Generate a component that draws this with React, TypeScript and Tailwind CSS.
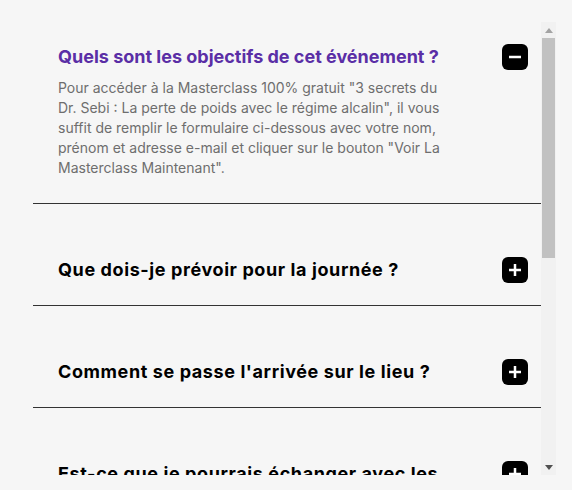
import React from "react";

const faqs = [
    {
        q: "Quels sont les objectifs de cet événement ?",
        a: [
            "Pour accéder à la Masterclass 100% gratuit \"3 secrets du",
            "Dr. Sebi : La perte de poids avec le régime alcalin\", il vous",
            "suffit de remplir le formulaire ci-dessous avec votre nom,",
            "prénom et adresse e-mail et cliquer sur le bouton \"Voir La",
            "Masterclass Maintenant\".",
        ],
        open: true,
    },
    { q: "Que dois-je prévoir pour la journée ?", a: [], open: false },
    { q: "Comment se passe l'arrivée sur le lieu ?", a: [], open: false },
    { q: "Est-ce que je pourrais échanger avec les intervenants ?", a: [], open: false },
    { q: "Combien de temps dure la Masterclass ?", a: [], open: false },
    { q: "Puis-je revoir la Masterclass plus tard ?", a: [], open: false },
];

const ToggleButton = ({ open }: { open: boolean }) => {
    return (
        <button className="shrink-0 w-[26px] h-[26px] rounded-[6px] bg-black flex items-center justify-center">
            <svg width="14" height="14" viewBox="0 0 14 14">
                <rect x="1" y="5.75" width="12" height="2.5" fill="#fff" />
                {!open && <rect x="5.75" y="1" width="2.5" height="12" fill="#fff" />}
            </svg>
        </button>
    );
};

const Scrollbar = () => {
    return (
        <div className="w-[15px] h-full bg-[#f1f1f1] flex flex-col shrink-0">
            <div className="h-[16px] flex items-center justify-center">
                <svg width="8" height="5" viewBox="0 0 8 5">
                    <path d="M0 5 L4 0 L8 5 Z" fill="#a3a3a3" />
                </svg>
            </div>
            <div className="mx-[1px] h-[220px] bg-[#c1c1c1]" />
            <div className="flex-1" />
            <div className="h-[16px] flex items-center justify-center">
                <svg width="8" height="5" viewBox="0 0 8 5">
                    <path d="M0 0 L8 0 L4 5 Z" fill="#505050" />
                </svg>
            </div>
        </div>
    );
};

const App = () => {
    return (
        <div className="w-[572px] h-[490px] bg-[#f6f6f6] pt-[22px]" style={{ fontFamily: "Inter, sans-serif" }}>
            <div className="ml-[33px] w-[523px] h-[453px] flex">
                <div className="flex-1 overflow-hidden">
                    {faqs.map((item, i) => (
                        <div
                            key={i}
                            className={`border-b border-[#333] pl-[25px] pr-[13px] ${i === 0 ? "pt-[22px] pb-[25px]" : "pt-[53px] pb-[22px]"}`}
                        >
                            <div className="flex items-start justify-between gap-6">
                                <h3
                                    className={`text-[18px] leading-[26px] font-bold ${item.open ? "text-[#5a2ea6]" : "text-black tracking-[0.6px]"}`}
                                >
                                    {item.q}
                                </h3>
                                <ToggleButton open={item.open} />
                            </div>
                            {item.open && (
                                <p className="mt-2 text-[14px] leading-[20px] text-[#6e6e6e]">
                                    {item.a.map((line, j) => (
                                        <React.Fragment key={j}>
                                            {line}
                                            {j < item.a.length - 1 && <br />}
                                        </React.Fragment>
                                    ))}
                                </p>
                            )}
                        </div>
                    ))}
                </div>
                <Scrollbar />
            </div>
        </div>
    );
};

export default App;
